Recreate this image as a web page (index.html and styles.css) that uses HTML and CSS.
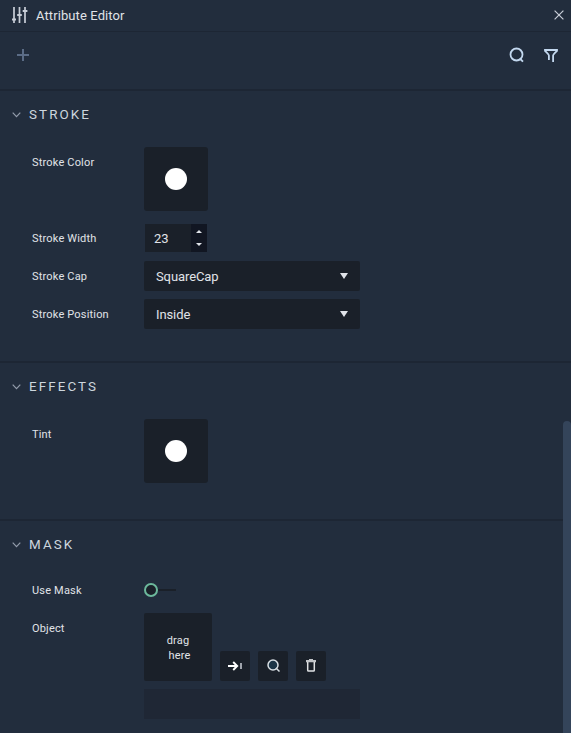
FILE: index.html
```html
<!DOCTYPE html>
<html lang="en">
<head>
<meta charset="utf-8">
<title>Attribute Editor</title>
<link rel="stylesheet" href="styles.css">
</head>
<body>
<main class="panel">
  <header class="titlebar">
    <svg class="sliders" width="16" height="18" viewBox="0 0 16 18"><path d="M2 1v16M7.5 1v16M13 1v16"/><path class="knob" d="M0 13.5h4M5.2 9h4.6M10.7 5h4.7"/></svg>
    <h1 class="title">Attribute Editor</h1>
    <svg class="close" width="10" height="10" viewBox="0 0 10 10"><path d="M.6.6l8.8 8.8M9.4.6L.6 9.4"/></svg>
  </header>
  <div class="toolbar">
    <svg class="plus" width="12" height="12" viewBox="0 0 12 12"><path d="M6 0v12M0 6h12"/></svg>
    <svg class="tool search" width="16" height="16" viewBox="0 0 16 16"><circle cx="7.5" cy="7.5" r="6"/><path d="M10.8 11.5l3.2 3.2"/></svg>
    <svg class="tool" width="14" height="16" viewBox="0 0 14 16"><path d="M4.9 13V8.5Q4.9 7.6 1 3.8V3h12v.8Q9.1 7.6 9.1 8.5V15"/></svg>
  </div>

  <section class="section">
    <div class="section-head"><svg class="chevron" width="9" height="6" viewBox="0 0 9 6"><path d="M.7.7l3.8 4 3.8-4"/></svg><h2>STROKE</h2></div>
    <div class="rows">
      <div class="row color-row"><span class="label">Stroke Color</span><div class="swatch"><i></i></div></div>
      <div class="row"><span class="label">Stroke Width</span>
        <div class="number"><span>23</span><div class="spin">
          <svg width="6" height="3" viewBox="0 0 6 3"><path d="M3 0l3 3H0z"/></svg>
          <svg width="6" height="3" viewBox="0 0 6 3"><path d="M0 0h6L3 3z"/></svg>
        </div></div>
      </div>
      <div class="row"><span class="label">Stroke Cap</span><div class="select"><span>SquareCap</span><svg width="8" height="6" viewBox="0 0 8 6"><path d="M0 0h8L4 6z"/></svg></div></div>
      <div class="row"><span class="label">Stroke Position</span><div class="select"><span>Inside</span><svg width="8" height="6" viewBox="0 0 8 6"><path d="M0 0h8L4 6z"/></svg></div></div>
    </div>
  </section>

  <section class="section">
    <div class="section-head"><svg class="chevron" width="9" height="6" viewBox="0 0 9 6"><path d="M.7.7l3.8 4 3.8-4"/></svg><h2>EFFECTS</h2></div>
    <div class="rows">
      <div class="row color-row"><span class="label">Tint</span><div class="swatch"><i></i></div></div>
    </div>
  </section>

  <section class="section mask">
    <div class="section-head"><svg class="chevron" width="9" height="6" viewBox="0 0 9 6"><path d="M.7.7l3.8 4 3.8-4"/></svg><h2>MASK</h2></div>
    <div class="rows">
      <div class="row"><span class="label">Use Mask</span><div class="toggle"><i></i><b></b></div></div>
      <div class="row"><span class="label">Object</span>
        <div class="object">
          <div class="drop"><span>drag</span><span class="second">here</span></div>
          <button class="action"><svg width="14" height="10" viewBox="0 0 14 10"><path class="arrow" d="M0 5h9M5.2 1l4 4-4 4"/><path class="bar" d="M13 2v6"/></svg></button>
          <button class="action"><svg class="find" width="13" height="13" viewBox="0 0 13 13"><circle cx="6" cy="6" r="5"/><path d="M9 9l3.5 3.5"/></svg></button>
          <button class="action"><svg class="trash" width="10" height="13" viewBox="0 0 10 13"><path class="lid" d="M0 1h10v2.2H0zM3 0h4v1H3z"/><path class="can" d="M1.7 3v8.2q0 .8.8.8h5q.8 0 .8-.8V3"/></svg></button>
          <div class="name-field"></div>
        </div>
      </div>
    </div>
  </section>
  <div class="scrollbar"></div>
</main>
</body>
</html>
```
FILE: styles.css
```css
* { box-sizing: border-box; }
body { margin: 0; background: #222d3d; color: #e0e3e8; font: 11px/15px Roboto, sans-serif; overflow: hidden; }
h1, h2 { margin: 0; font-weight: 400; }
svg { display: block; flex: none; fill: none; stroke: #c8ced8; }
.panel { position: relative; width: 571px; height: 733px; overflow: hidden; }
.titlebar { height: 32px; display: flex; align-items: center; padding: 0 7px 2px 12px; border-bottom: 1px solid #1d2634; }
.sliders { stroke-width: 1.7; }
.knob { stroke-width: 2; }
.title { flex: 1; margin-left: 8px; padding-top: 3px; font-size: 13px; line-height: 16px; letter-spacing: .1px; }
.close { stroke-width: 1.2; }
.toolbar { height: 57px; display: flex; align-items: center; padding: 0 13px 11px 17px; }
.plus { stroke: #5b6c86; stroke-width: 2; margin-right: auto; }
.tool { stroke: #c3d8ef; stroke-width: 1.8; }
.search { margin-right: 19px; }
.section { border-top: 2px solid #1d2634; padding-bottom: 32px; }
.section-head { height: 56px; display: flex; align-items: flex-start; padding: 16px 0 0 12px; }
.section-head h2 { margin-left: 8px; font-size: 13.4px; line-height: 16px; letter-spacing: 2.1px; color: #cdd6de; }
.chevron { margin-top: 5px; stroke: #929baa; stroke-width: 1.2; }
.rows { display: flex; flex-direction: column; gap: 8px; padding-left: 32px; }
.row { display: flex; min-height: 30px; }
.color-row { height: 68px; }
.label { width: 112px; padding-top: 1px; line-height: 30px; height: 30px; letter-spacing: .18px; }
.swatch { width: 64px; height: 64px; display: flex; align-items: center; justify-content: center; border-radius: 3px; background: #1a2029; }
.swatch i { width: 22px; height: 22px; border-radius: 50%; background: #fff; }
.number { width: 62px; height: 28px; margin: 1px 0 0 1px; display: flex; background: #1a2029; font-size: 13px; line-height: 29px; }
.number > span { flex: 1; padding-left: 9px; }
.spin { width: 16px; display: flex; flex-direction: column; align-items: center; justify-content: space-between; padding: 6px 0; background: #111622; }
.spin svg, .select svg { fill: #e1e4ea; stroke: none; }
.select { width: 216px; height: 30px; display: flex; align-items: center; justify-content: space-between; padding: 0 12px; border-radius: 2px; background: #1a2029; font-size: 13px; letter-spacing: -.1px; }
.mask { padding-bottom: 14px; }
.mask .section-head { height: 54px; }
.toggle { display: flex; align-items: center; height: 30px; }
.toggle i { width: 14px; height: 14px; border: 2px solid #6cb89c; border-radius: 50%; background: #1a2029; }
.toggle b { width: 18px; height: 2px; background: #1a2029; }
.object { width: 216px; display: flex; flex-wrap: wrap; align-items: flex-end; gap: 8px; }
.drop { width: 68px; height: 68px; padding-top: 1px; display: flex; flex-direction: column; align-items: center; justify-content: center; border-radius: 2px; background: #1a2029; letter-spacing: .18px; }
.second { padding-left: 3px; }
.action { width: 30px; height: 30px; padding: 0 0 1px; border: 0; border-radius: 2px; background: #1a2029; display: flex; align-items: center; justify-content: center; }
.arrow { stroke: #fff; stroke-width: 1.9; }
.bar { stroke: #aeb3ba; stroke-width: 1.8; }
.find { stroke: #d8dfe4; stroke-width: 1.5; }
.find circle { fill: #1c3547; }
.lid { fill: #c1c4c8; stroke: none; }
.can { stroke: #dfe1e3; stroke-width: 1.5; }
.name-field { width: 216px; height: 30px; background: #1f2735; }
.scrollbar { position: absolute; right: 0; top: 421px; width: 8px; height: 320px; border-radius: 4px; background: #34445a; }
```
